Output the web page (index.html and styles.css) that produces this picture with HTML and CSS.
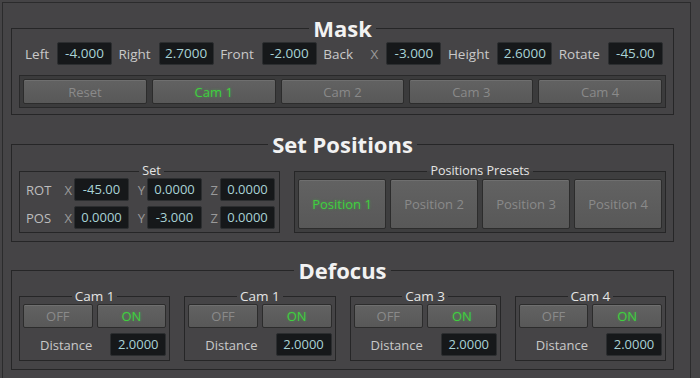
FILE: index.html
```html
<!DOCTYPE html>
<html>

<head>
    <title>Camera Setup</title>
    <link rel="stylesheet" href="styles.css">
</head>

<body>
    <div class="frame">

        <fieldset class="group mask">
            <legend class="title">Mask</legend>
            <div class="mask-row">
                <span class="lbl">Left</span>
                <span class="val">-4.000</span>
                <span class="lbl">Right</span>
                <span class="val">2.7000</span>
                <span class="lbl">Front</span>
                <span class="val">-2.000</span>
                <span class="lbl">Back <span class="axis back-x">X</span></span>
                <span class="val">-3.000</span>
                <span class="lbl">Height</span>
                <span class="val">2.6000</span>
                <span class="lbl">Rotate</span>
                <span class="val">-45.00</span>
            </div>
            <div class="btn-strip">
                <button class="btn">Reset</button>
                <button class="btn on">Cam 1</button>
                <button class="btn">Cam 2</button>
                <button class="btn">Cam 3</button>
                <button class="btn">Cam 4</button>
            </div>
        </fieldset>

        <fieldset class="group positions">
            <legend class="title">Set Positions</legend>
            <div class="pos-body">
                <fieldset class="sub set-box">
                    <legend class="sub-title">Set</legend>
                    <div class="set-grid">
                        <span class="row-lbl">ROT</span>
                        <span class="axis">X</span><span class="val">-45.00</span>
                        <span class="axis">Y</span><span class="val">0.0000</span>
                        <span class="axis">Z</span><span class="val">0.0000</span>
                        <span class="row-lbl">POS</span>
                        <span class="axis">X</span><span class="val">0.0000</span>
                        <span class="axis">Y</span><span class="val">-3.000</span>
                        <span class="axis">Z</span><span class="val">0.0000</span>
                    </div>
                </fieldset>
                <fieldset class="sub presets">
                    <legend class="sub-title">Positions Presets</legend>
                    <div class="preset-row">
                        <button class="btn big on">Position 1</button>
                        <button class="btn big">Position 2</button>
                        <button class="btn big">Position 3</button>
                        <button class="btn big">Position 4</button>
                    </div>
                </fieldset>
            </div>
        </fieldset>

        <fieldset class="group defocus">
            <legend class="title">Defocus</legend>
            <div class="cam-row">
                <fieldset class="sub cam">
                    <legend class="sub-title cam-title">Cam 1</legend>
                    <div class="toggle">
                        <button class="btn">OFF</button>
                        <button class="btn on">ON</button>
                    </div>
                    <div class="dist">
                        <span class="lbl">Distance</span>
                        <span class="val">2.0000</span>
                    </div>
                </fieldset>
                <fieldset class="sub cam">
                    <legend class="sub-title cam-title">Cam 1</legend>
                    <div class="toggle">
                        <button class="btn">OFF</button>
                        <button class="btn on">ON</button>
                    </div>
                    <div class="dist">
                        <span class="lbl">Distance</span>
                        <span class="val">2.0000</span>
                    </div>
                </fieldset>
                <fieldset class="sub cam">
                    <legend class="sub-title cam-title">Cam 3</legend>
                    <div class="toggle">
                        <button class="btn">OFF</button>
                        <button class="btn on">ON</button>
                    </div>
                    <div class="dist">
                        <span class="lbl">Distance</span>
                        <span class="val">2.0000</span>
                    </div>
                </fieldset>
                <fieldset class="sub cam">
                    <legend class="sub-title cam-title">Cam 4</legend>
                    <div class="toggle">
                        <button class="btn">OFF</button>
                        <button class="btn on">ON</button>
                    </div>
                    <div class="dist">
                        <span class="lbl">Distance</span>
                        <span class="val">2.0000</span>
                    </div>
                </fieldset>
            </div>
        </fieldset>

    </div>
</body>

</html>
```

FILE: styles.css
```css
body {
    margin: 0;
    background-color: #454446;
    font-family: "Open Sans", "DejaVu Sans", sans-serif;
    font-size: 13px;
    color: #c9c9c9;
    overflow: hidden;
}

.frame {
    margin: 2px 0 0 2px;
    width: 689px;
    height: 376px;
    box-sizing: border-box;
    border: 1px solid #2b2b2c;
    border-bottom: none;
    padding: 13px 16px 0 8px;
}

/* group boxes */
fieldset {
    margin: 0;
    min-width: 0;
    border: 1px solid #262627;
}

.group {
    padding: 2px 7px 6px 7px;
}

.title {
    margin: 0 auto;
    padding: 0 4px;
    font-size: 22px;
    line-height: 24px;
    font-weight: bold;
    color: #f2f2f2;
}

.sub-title {
    margin: 0 auto;
    padding: 0 3px;
    font-size: 12.5px;
    line-height: 14px;
    color: #e4e4e4;
}

.cam-title {
    font-size: 13.5px;
}

/* value boxes */
.val {
    display: inline-block;
    width: 55px;
    height: 23px;
    box-sizing: border-box;
    background-color: #16181a;
    border: 1px solid #2c2e30;
    border-radius: 2px;
    color: #a9d3d6;
    text-align: center;
    line-height: 21px;
}

.lbl {
    color: #c9c9c9;
}

.axis {
    color: #9a9a9a;
}

/* buttons */
.btn {
    height: 25px;
    padding: 0;
    font-family: inherit;
    font-size: 13px;
    color: #8a8a8a;
    background: linear-gradient(#626262, #585858);
    border: 1px solid #2c2c2c;
    border-radius: 2px;
    box-shadow: inset 0 1px 0 #6f6f6f;
}

.btn.on {
    color: #3fd03f;
    text-shadow: 0 0 3px rgba(60, 220, 60, 0.45);
}

/* Mask */
.mask-row {
    display: flex;
    align-items: center;
    padding: 0 3px 0 6px;
    font-size: 13.5px;
}

.mask-row .lbl {
    margin-right: 8px;
}

.mask-row .val {
    margin-right: auto;
}

.mask-row .val:last-child {
    margin-right: 0;
}

.back-x {
    margin-left: 14px;
}

.btn-strip {
    display: flex;
    gap: 5px;
    margin-top: 10px;
    padding: 3px;
    background-color: #3b3b3c;
    border: 1px solid #29292a;
}

.btn-strip .btn {
    flex: 1;
}

/* Set Positions */
.positions {
    margin-top: 17px;
    padding: 8px 7px 8px 7px;
}

.pos-body {
    display: flex;
    gap: 14px;
}

.set-box {
    width: 261px;
    box-sizing: border-box;
    padding: 0 2px 3px 6px;
}

.set-grid {
    display: grid;
    grid-template-columns: 36px 12px 55px 18px 55px 18px 55px;
    row-gap: 5px;
    align-items: center;
}

.set-grid .axis {
    text-align: right;
    padding-right: 2px;
}

.row-lbl {
    color: #bdbdbd;
}

.presets {
    flex: 1;
    padding: 1px 3px 3px 3px;
    background-color: #3e3e3f;
}

.preset-row {
    display: flex;
    gap: 4px;
}

.btn.big {
    flex: 1;
    height: 50px;
}

/* Defocus */
.defocus {
    margin-top: 16px;
    padding: 7px 7px 8px 7px;
}

.cam-row {
    display: flex;
    gap: 14px;
}

.cam {
    flex: 1;
    padding: 1px 3px 4px 3px;
}

.toggle {
    display: flex;
    gap: 4px;
}

.toggle .btn {
    flex: 1;
    height: 24px;
}

.dist {
    display: flex;
    align-items: center;
    justify-content: space-between;
    margin-top: 5px;
    padding-left: 17px;
}

.dist .val {
    width: 56px;
}
```
